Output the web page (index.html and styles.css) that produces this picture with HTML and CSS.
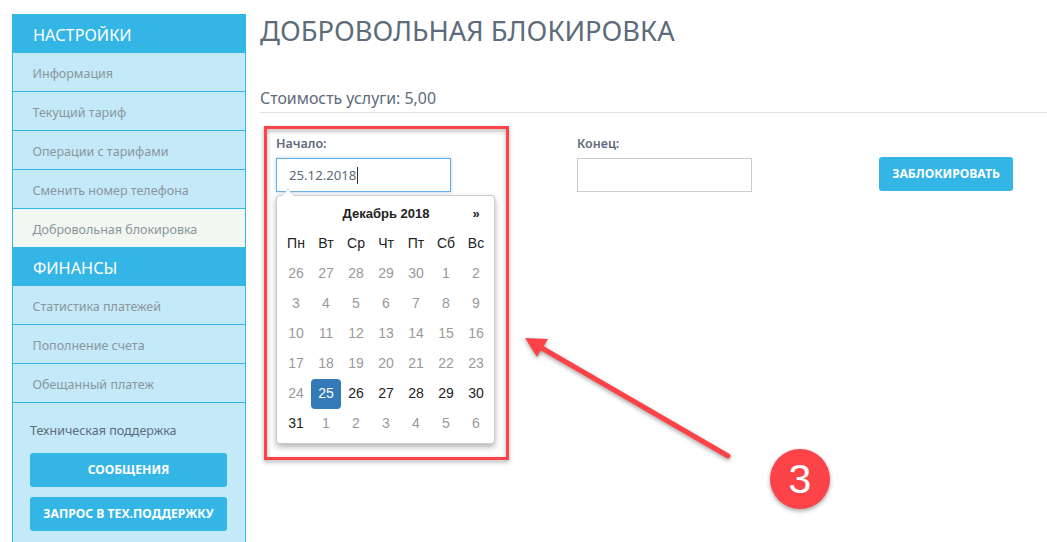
FILE: index.html
```html
<!DOCTYPE html>
<html lang="ru">
<head>
<meta charset="utf-8">
<title>Добровольная блокировка</title>
<link rel="stylesheet" href="styles.css">
</head>
<body>
<div class="page">
  <aside class="sidebar">
    <div class="side-head">НАСТРОЙКИ</div>
    <a class="side-item">Информация</a>
    <a class="side-item">Текущий тариф</a>
    <a class="side-item">Операции с тарифами</a>
    <a class="side-item">Сменить номер телефона</a>
    <a class="side-item active">Добровольная блокировка</a>
    <div class="side-head">ФИНАНСЫ</div>
    <a class="side-item">Статистика платежей</a>
    <a class="side-item">Пополнение счета</a>
    <a class="side-item">Обещанный платеж</a>
    <div class="support">
      <div class="support-title">Техническая поддержка</div>
      <a class="btn btn-wide">СООБЩЕНИЯ</a>
      <a class="btn btn-wide">ЗАПРОС В ТЕХ.ПОДДЕРЖКУ</a>
    </div>
  </aside>
  <main class="content">
    <h1 class="title">ДОБРОВОЛЬНАЯ БЛОКИРОВКА</h1>
    <div class="cost">Стоимость услуги: 5,00</div>
    <div class="form-row">
      <div class="field field-start">
        <label class="label">Начало:</label>
        <div class="input focused">25.12.2018<span class="caret"></span></div>
        <div class="picker">
          <div class="picker-title"><span></span><span class="month">Декабрь 2018</span><span class="next">»</span></div>
          <div class="days">
            <b>Пн</b><b>Вт</b><b>Ср</b><b>Чт</b><b>Пт</b><b>Сб</b><b>Вс</b>
            <i>26</i><i>27</i><i>28</i><i>29</i><i>30</i><i>1</i><i>2</i>
            <i>3</i><i>4</i><i>5</i><i>6</i><i>7</i><i>8</i><i>9</i>
            <i>10</i><i>11</i><i>12</i><i>13</i><i>14</i><i>15</i><i>16</i>
            <i>17</i><i>18</i><i>19</i><i>20</i><i>21</i><i>22</i><i>23</i>
            <i>24</i><em class="selected">25</em><em>26</em><em>27</em><em>28</em><em>29</em><em>30</em>
            <em>31</em><i>1</i><i>2</i><i>3</i><i>4</i><i>5</i><i>6</i>
          </div>
        </div>
      </div>
      <div class="field field-end">
        <label class="label">Конец:</label>
        <div class="input"></div>
      </div>
      <a class="btn btn-block">ЗАБЛОКИРОВАТЬ</a>
    </div>
  </main>
</div>
<svg class="annotations" width="1047" height="542" viewBox="0 0 1047 542" aria-hidden="true">
  <g class="anno-shape">
    <rect x="265.5" y="127.5" width="242" height="331" fill="none" stroke="#fb4348" stroke-width="3"/>
    <path d="M728 456 L540 347" fill="none" stroke="#fb4348" stroke-width="5" stroke-linecap="round"/>
    <path d="M525 338 L548 339 L537 357 Z" fill="#fb4348"/>
    <circle cx="800" cy="479" r="30" fill="#fb4348"/>
  </g>
</svg>
<div class="badge-num">3</div>
</body>
</html>
```
FILE: styles.css
```css
html, body { margin: 0; padding: 0; height: 100%; overflow: hidden; background: #fff; }
body { font-family: "Noto Sans", "Open Sans", sans-serif; color: #5d6b7a; position: relative; }
.page { display: flex; height: 100%; padding: 14px 0 0 12px; box-sizing: border-box; }

.sidebar { width: 234px; flex: none; background: #c4e9f9; border: solid #33b5e6; border-width: 0 1px; box-sizing: border-box; display: flex; flex-direction: column; }
.side-head { height: 39px; margin: 0 -1px; background: #33b5e6; color: #fff; font-size: 16.3px; line-height: 43px; padding-left: 21px; flex: none; }
.side-item { height: 39px; box-sizing: border-box; border-bottom: 1px solid #33b5e6; color: #8a969c; font-size: 12.5px; line-height: 41px; padding-left: 19.5px; flex: none; }
.side-item.active { height: 38px; background: #f2f7f2; border-bottom: 0; }
.support { padding: 18px 18px 0 17px; }
.support-title { font-size: 12.5px; color: #5d6b7a; line-height: 20px; margin-bottom: 12px; }

.btn { display: block; background: #33b5e6; color: #fff; font-weight: 700; font-size: 12.2px; text-align: center; border-radius: 3px; height: 34px; line-height: 34px; }
.btn-wide { margin-bottom: 10px; }
.btn-block { width: 134px; margin: 23px 0 0 127px; flex: none; height: 34px; }

.content { flex: 1; margin-left: 14px; min-width: 0; }
.title { margin: 0; font-weight: 400; font-size: 27.3px; line-height: 34px; color: #5d6b7a; }
.cost { margin-top: 36px; height: 28px; line-height: 28px; border-bottom: 1px solid #e3e3e3; font-size: 15.9px; }
.form-row { display: flex; padding: 21px 0 0 16px; }
.field { width: 175px; flex: none; position: relative; }
.field-end { margin-left: 126px; }
.label { display: block; font-size: 12.5px; font-weight: 600; line-height: 20px; margin-bottom: 4px; }
.input { height: 34px; box-sizing: border-box; border: 1px solid #ccc; padding-left: 12px; font-size: 13.2px; line-height: 32px; color: #5d6b7a; }
.input.focused { border-color: #66afe9; box-shadow: 0 0 3px rgba(102,175,233,.6); }
.caret { display: inline-block; width: 1px; height: 17px; background: #333; vertical-align: -4px; margin-left: 1px; }

.picker { position: absolute; left: 0; top: 61px; width: 219px; height: 249px; box-sizing: border-box; padding: 3px 2px 3px 4px; background: #fff; border: 1px solid rgba(0,0,0,.2); border-radius: 4px; box-shadow: 0 3px 6px rgba(0,0,0,.3); font-family: "Liberation Sans", Arial, sans-serif; color: #222; font-size: 14px; }
.picker::before { content: ""; position: absolute; left: 4px; top: -7px; border: solid transparent; border-width: 0 7px 7px; border-bottom-color: #ccc; }
.picker::after { content: ""; position: absolute; left: 5px; top: -6px; border: solid transparent; border-width: 0 6px 6px; border-bottom-color: #fff; }
.picker-title { display: grid; grid-template-columns: 30px 150px 30px; height: 30px; line-height: 30px; text-align: center; font-weight: 700; font-size: 13px; }
.days { display: grid; grid-template-columns: repeat(7, 30px); grid-auto-rows: 30px; line-height: 29px; text-align: center; }
.days b { font-weight: 400; font-size: 14px; color: #222; }
.days i { font-style: normal; color: #999; }
.days em { font-style: normal; color: #222; }
.days .selected { background: #337ab7; color: #fff; border-radius: 4px; }

.annotations { position: absolute; left: 0; top: 0; pointer-events: none; }
.anno-shape { filter: drop-shadow(0 2px 2px rgba(0,0,0,.35)); }
.badge-num { position: absolute; left: 770px; top: 449px; width: 60px; height: 60px; line-height: 60px; text-align: center; color: #fff; font-family: "Liberation Sans", Arial, sans-serif; font-size: 41px; }
```
